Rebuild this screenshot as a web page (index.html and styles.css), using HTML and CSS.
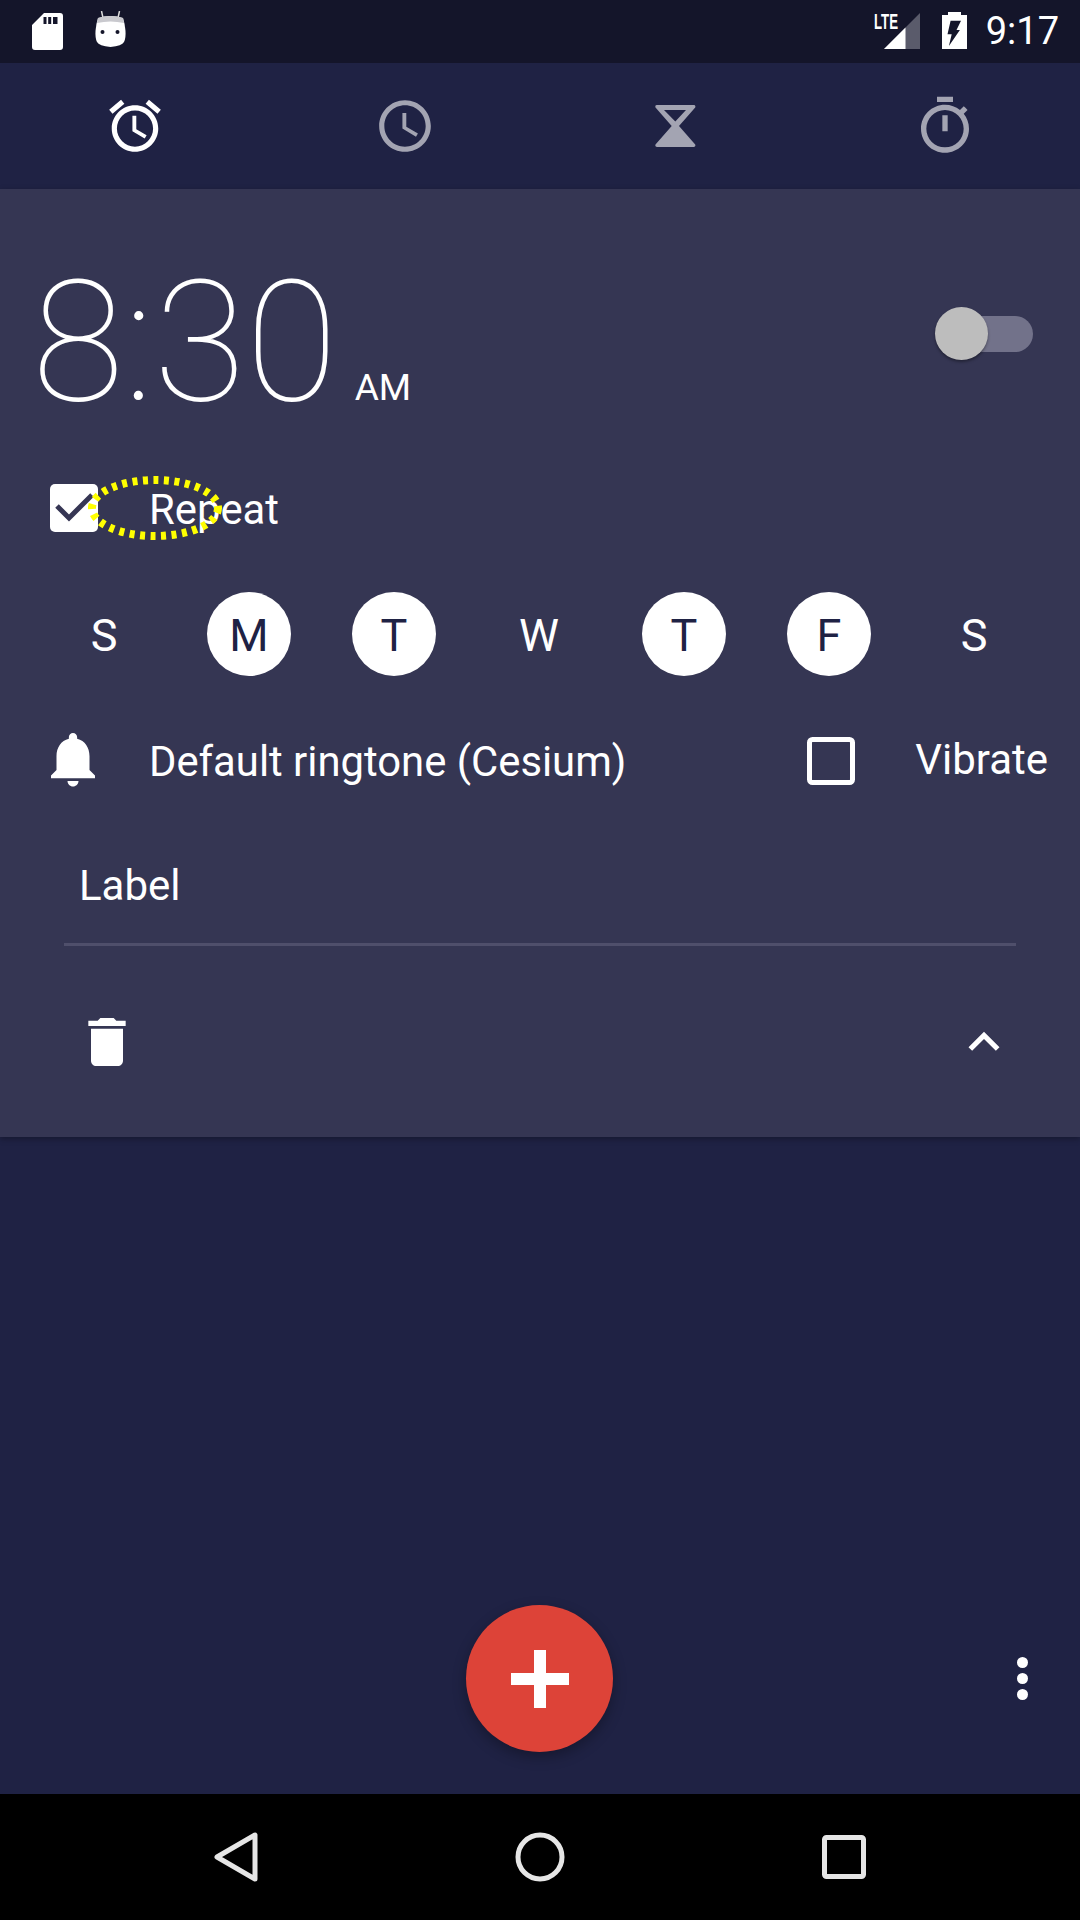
FILE: index.html
```html
<!DOCTYPE html>
<html lang="en">
<head>
    <meta charset="UTF-8">
    <meta name="viewport" content="width=device-width, initial-scale=1.0">
    <title>Clock</title>
    <link rel="stylesheet" href="styles.css">
</head>
<body>
    <div class="status-bar">
        <svg class="sd-icon" width="31" height="37" viewBox="0 0 31 37">
            <path fill="#fff" fill-rule="evenodd" d="M12 0H28Q31 0 31 3V34Q31 37 28 37H3Q0 37 0 34V12ZM11.500 4V11H14.500V4ZM16.200 4V11H19.200V4ZM21 4V11H25.500V4Z"/>
        </svg>
        <svg class="android-icon" width="31" height="36" viewBox="0 0 31 36">
            <path d="M6.500 0L8 7M24.500 0L23 7" stroke="#ddd" stroke-width="1.500" fill="none"/>
            <path fill="#fff" d="M3 7Q15.500 3 28 7Q30 13 30.500 20Q31 27 29 31Q27 35 15.500 36Q4 35 2 31Q0 27 .5 20Q1 13 3 7Z"/>
            <path fill="#c9c9ce" d="M3 7Q15.500 3 28 7L29 12Q15.500 9 2 12Z"/>
            <circle cx="7.500" cy="21" r="2" fill="#14152a"/>
            <circle cx="22.500" cy="21" r="2" fill="#14152a"/>
        </svg>
        <div class="status-right">
            <svg class="signal-icon" width="47" height="37" viewBox="0 0 47 37">
                <text class="lte-text" x="0" y="17" textLength="24" lengthAdjust="spacingAndGlyphs">LTE</text>
                <path fill="#5a5b6b" d="M46 1V37H10Z"/>
                <path fill="#fff" d="M10 37L31.500 15.500V37Z"/>
            </svg>
            <svg class="battery-icon" width="25" height="37" viewBox="0 0 25 37">
                <path fill="#fff" fill-rule="evenodd" d="M6 0H19V3H25V37H0V3H6ZM8.600 8.700L5.500 22.300H9.700L6.900 34L17.900 18H14.500L19 8.700Z"/>
            </svg>
            <span class="status-time">9:17</span>
        </div>
    </div>

    <nav class="tabs">
        <div class="tab">
            <svg width="62" height="62" viewBox="0 0 24 24"><path d="M22 5.720l-4.600-3.860-1.290 1.530 4.600 3.860L22 5.720zM7.880 3.390L6.600 1.860 2 5.710l1.290 1.530 4.590-3.850zM12.500 8H11v6l4.750 2.850.75-1.230-4-2.370V8zM12 4c-4.970 0-9 4.030-9 9s4.030 9 9 9 9-4.030 9-9-4.030-9-9-9zm0 16c-3.870 0-7-3.130-7-7s3.130-7 7-7 7 3.130 7 7-3.130 7-7 7z"/></svg>
        </div>
        <div class="tab dim">
            <svg width="62" height="62" viewBox="0 0 24 24"><path d="M11.990 2C6.470 2 2 6.480 2 12s4.470 10 9.990 10C17.520 22 22 17.520 22 12S17.520 2 11.990 2zM12 20c-4.420 0-8-3.580-8-8s3.580-8 8-8 8 3.580 8 8-3.580 8-8 8zm.5-13H11v6l5.250 3.150.75-1.230-4.500-2.670z"/></svg>
        </div>
        <div class="tab dim">
            <svg width="41" height="42" viewBox="0 0 41 42"><path fill-rule="evenodd" d="M2 0H38.700Q41 0 40.200 2.500L24 21L40.200 39.500Q41 42 38.700 42H2Q-.3 42 .5 39.500L16.700 21L.5 2.500Q-.3 0 2 0ZM9 5L20.300 16.500L31 5Z"/></svg>
        </div>
        <div class="tab dim">
            <svg width="64" height="64" viewBox="0 0 24 24"><path d="M15 1H9v2h6V1zm-4 13h2V8h-2v6zm8.030-6.610l1.420-1.420c-.43-.51-.9-.99-1.410-1.410l-1.420 1.420C16.070 4.740 14.120 4 12 4c-4.970 0-9 4.030-9 9s4.020 9 9 9 9-4.030 9-9c0-2.120-.74-4.070-1.970-5.610zM12 20c-3.870 0-7-3.130-7-7s3.130-7 7-7 7 3.130 7 7-3.130 7-7 7z"/></svg>
        </div>
    </nav>

    <main class="content">
        <section class="alarm-card">
            <div class="time-row">
                <span class="time">8:30</span>
                <span class="ampm">AM</span>
                <div class="toggle">
                    <div class="toggle-track"></div>
                    <div class="toggle-thumb"></div>
                </div>
            </div>

            <div class="repeat-row">
                <svg width="48" height="48" viewBox="0 0 48 48">
                    <rect width="48" height="48" rx="5" fill="#fff"/>
                    <path d="M7 22L19 34L42 11" fill="none" stroke="#363654" stroke-width="5"/>
                </svg>
                <span class="row-text">Repeat</span>
                <svg class="highlight" width="136" height="64" viewBox="0 0 136 64">
                    <ellipse cx="68" cy="32" rx="63" ry="28" fill="none" stroke="#ffff00" stroke-width="8" stroke-dasharray="5 5.500"/>
                </svg>
            </div>

            <div class="days">
                <span class="day">S</span>
                <span class="day on">M</span>
                <span class="day on">T</span>
                <span class="day">W</span>
                <span class="day on">T</span>
                <span class="day on">F</span>
                <span class="day">S</span>
            </div>

            <div class="ringtone-row">
                <svg class="bell" width="66" height="66" viewBox="0 0 24 24"><path d="M12 22c1.100 0 2-.9 2-2h-4c0 1.100.89 2 2 2zm6-6v-5c0-3.070-1.640-5.640-4.500-6.320V4c0-.83-.67-1.500-1.500-1.500s-1.500.67-1.500 1.500v.68C7.630 5.360 6 7.920 6 11v5l-2 2v1h16v-1l-2-2z"/></svg>
                <span class="row-text">Default ringtone (Cesium)</span>
                <svg class="vibrate-box" width="48" height="48" viewBox="0 0 48 48">
                    <rect x="2.500" y="2.500" width="43" height="43" rx="3" fill="none" stroke="#fff" stroke-width="5"/>
                </svg>
                <span class="vibrate-text">Vibrate</span>
            </div>

            <div class="label-row">Label</div>

            <div class="actions">
                <svg width="64" height="64" viewBox="0 0 24 24"><path d="M6 19c0 1.100.9 2 2 2h8c1.100 0 2-.9 2-2V7H6v12zM19 4h-3.500l-1-1h-5l-1 1H5v2h14V4z"/></svg>
                <svg width="62" height="62" viewBox="0 0 24 24"><path d="M12 8l-6 6 1.410 1.410L12 10.830l4.590 4.580L18 14z"/></svg>
            </div>
        </section>

        <div class="bottom-actions">
            <div></div>
            <button class="fab">
                <svg width="58" height="58" viewBox="0 0 58 58"><path d="M23 0H35V23H58V35H35V58H23V35H0V23H23Z"/></svg>
            </button>
            <div class="overflow">
                <i></i><i></i><i></i>
            </div>
        </div>
    </main>

    <div class="nav-bar">
        <svg width="44" height="50" viewBox="0 0 44 50"><path d="M3 25L41 3V47Z" fill="none" stroke="#e6e6e6" stroke-width="5" stroke-linejoin="round"/></svg>
        <svg width="50" height="50" viewBox="0 0 50 50"><circle cx="25" cy="25" r="22" fill="none" stroke="#e6e6e6" stroke-width="5"/></svg>
        <svg width="44" height="44" viewBox="0 0 44 44"><rect x="2.500" y="2.500" width="39" height="39" rx="2" fill="none" stroke="#e6e6e6" stroke-width="5"/></svg>
    </div>
</body>
</html>
```

FILE: styles.css
```css
body {
    font-family: Roboto, "Liberation Sans", sans-serif;
    background-color: #1f2244;
    color: #fff;
    margin: 0;
    width: 1080px;
    height: 1920px;
    display: flex;
    flex-direction: column;
    overflow: hidden;
}

/* status bar */
.status-bar {
    height: 63px;
    background-color: #14152a;
    display: flex;
    align-items: flex-start;
}
.sd-icon {
    margin: 13px 0 0 32px;
}
.android-icon {
    margin: 11px 0 0 32px;
}
.status-right {
    margin-left: auto;
    display: flex;
    align-items: flex-start;
}
.signal-icon {
    margin: 12px 0 0 0;
    overflow: visible;
}
.lte-text {
    font-family: "Liberation Sans", sans-serif;
    font-weight: bold;
    font-size: 22px;
    fill: #fff;
}
.battery-icon {
    margin: 12px 0 0 21px;
}
.status-time {
    font-size: 38px;
    line-height: 63px;
    margin: 0 21px 0 19px;
}

/* tabs */
.tabs {
    height: 126px;
    display: flex;
}
.tab {
    flex: 1;
    display: flex;
    align-items: center;
    justify-content: center;
}
.tab svg {
    fill: #fff;
}
.tab.dim svg {
    fill: #a3a4b2;
}

.content {
    flex: 1;
    display: flex;
    flex-direction: column;
}

/* expanded alarm */
.alarm-card {
    height: 948px;
    background-color: #353653;
    box-shadow: 0 2px 6px rgba(0, 0, 0, 0.3);
    display: flex;
    flex-direction: column;
}
.time-row {
    height: 207px;
    padding: 54px 0 0 32px;
    display: flex;
    align-items: baseline;
}
.time {
    font-size: 168px;
    font-weight: 100;
    line-height: 200px;
}
.ampm {
    font-size: 37px;
    margin-left: 17px;
}
.toggle {
    position: relative;
    width: 98px;
    height: 53px;
    margin-left: auto;
    margin-right: 47px;
    align-self: flex-start;
    margin-top: 64px;
}
.toggle-track {
    margin: 9px 0 0 5px;
    height: 36px;
    border-radius: 18px;
    background-color: #72728a;
}
.toggle-thumb {
    position: absolute;
    left: 0;
    top: 0;
    width: 53px;
    height: 53px;
    border-radius: 50%;
    background-color: #bdbdbd;
    box-shadow: 0 2px 3px rgba(0, 0, 0, 0.35);
}

.repeat-row {
    position: relative;
    height: 116px;
    padding-left: 50px;
    display: flex;
    align-items: center;
}
.row-text {
    font-size: 41.8px;
    margin: 2px 0 0 51px;
}
.highlight {
    position: absolute;
    left: 87px;
    top: 26px;
}

.days {
    margin-top: 26px;
    height: 84px;
    padding-right: 2px;
    display: grid;
    grid-template-columns: repeat(7, 145px);
    justify-content: center;
}
.day {
    box-sizing: border-box;
    width: 84px;
    height: 84px;
    padding-top: 3px;
    justify-self: center;
    border-radius: 50%;
    font-size: 45px;
    display: flex;
    align-items: center;
    justify-content: center;
}
.day.on {
    background-color: #fff;
    color: #1f2244;
}

.ringtone-row {
    margin-top: 20px;
    height: 126px;
    display: flex;
    align-items: center;
}
.bell {
    fill: #fff;
    margin-left: 40px;
}
.ringtone-row .row-text {
    margin: 4px 0 0 43px;
}
.vibrate-box {
    margin: 3px 0 0 auto;
}
.vibrate-text {
    font-size: 42px;
    margin: 0 32px 0 60px;
}

.label-row {
    height: 103px;
    margin: 0 64px;
    padding: 18px 0 0 15px;
    border-bottom: 3px solid #4f4f6b;
    font-size: 42px;
    line-height: 92px;
}

.actions {
    flex: 1;
    padding: 0 65px 0 75px;
    display: flex;
    align-items: center;
    justify-content: space-between;
}
.actions svg {
    fill: #fff;
}

/* fab + overflow */
.bottom-actions {
    margin-top: auto;
    margin-bottom: 42px;
    display: grid;
    grid-template-columns: 466px auto 1fr;
    align-items: center;
}
.fab {
    width: 147px;
    height: 147px;
    padding: 0;
    border: none;
    border-radius: 50%;
    background-color: #dd4338;
    box-shadow: 0 5px 14px rgba(0, 0, 0, 0.3);
    display: flex;
    align-items: center;
    justify-content: center;
}
.fab svg {
    fill: #fff;
}
.overflow {
    justify-self: end;
    margin-right: 52px;
    display: flex;
    flex-direction: column;
    gap: 5px;
}
.overflow i {
    width: 11px;
    height: 11px;
    border-radius: 50%;
    background-color: #fff;
}

/* nav bar */
.nav-bar {
    height: 126px;
    background-color: #000;
    display: flex;
    align-items: center;
    padding: 0 214px 0 214px;
    justify-content: space-between;
}
```
